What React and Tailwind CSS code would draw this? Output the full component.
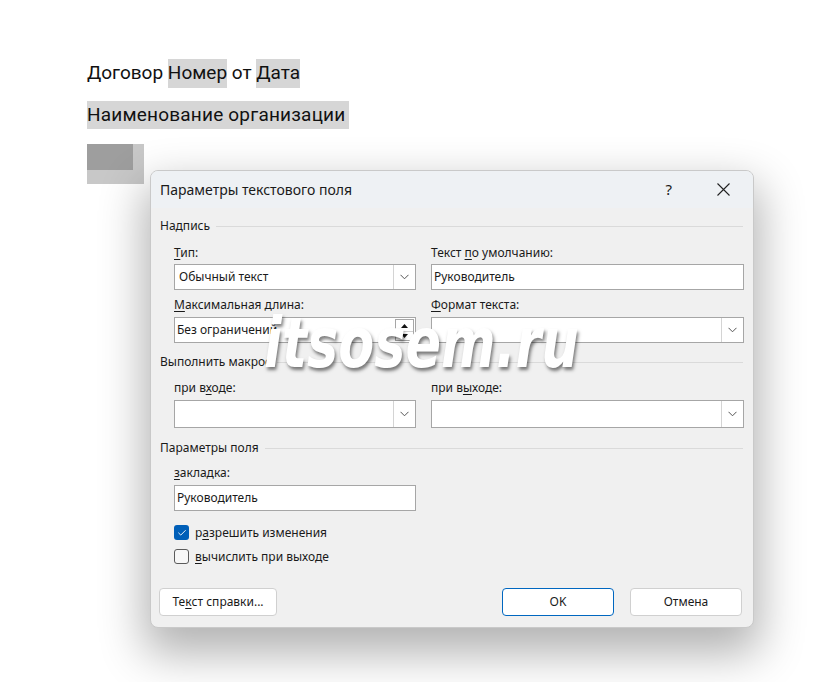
import { Check } from "lucide-react";

const ui = { fontFamily: '"Noto Sans", "Open Sans", sans-serif' };

function U({ children }) {
  return <span className="underline underline-offset-2">{children}</span>;
}

function Chevron() {
  return (
    <div className="flex w-[22px] shrink-0 items-center justify-center border-l border-[#d4d4d4]">
      <svg width="9" height="6" viewBox="0 0 9 6" fill="none">
        <path d="M0.5 0.8 L4.5 4.8 L8.5 0.8" stroke="#555" strokeWidth="1" />
      </svg>
    </div>
  );
}

function Select({ value, h = "h-[26px]" }) {
  return (
    <div className={`flex ${h} border border-[#a6a6a6] bg-white`}>
      <div className="flex flex-1 items-center px-[4px] text-[12px] text-[#1a1a1a]">{value}</div>
      <Chevron />
    </div>
  );
}

function Input({ value }) {
  return (
    <div className="flex h-[26px] items-center border border-[#a6a6a6] bg-white px-[2px] text-[12px] text-[#1a1a1a]">
      {value}
    </div>
  );
}

function Section({ title }) {
  return (
    <div className="flex h-[16px] items-center gap-[6px] pl-[9px] pr-[10px] text-[12px] text-[#1a1a1a]">
      <span>{title}</span>
      <div className="h-px flex-1 bg-[#dadada]" />
    </div>
  );
}

function Label({ children }) {
  return <div className="h-[16px] text-[12px] leading-[16px] text-[#1a1a1a]">{children}</div>;
}

export default function App() {
  return (
    <div className="relative h-[682px] w-[833px] overflow-hidden bg-white">
      {/* document */}
      <div className="pl-[87px] pt-[61px]" style={{ fontFamily: 'Roboto, "Noto Sans", sans-serif' }}>
        <div className="flex h-[25px] items-center text-[19px] text-[#111]">
          <span>Договор&nbsp;</span>
          <span className="bg-[#d6d6d6]">Номер</span>
          <span>&nbsp;от&nbsp;</span>
          <span className="bg-[#d6d6d6]">Дата</span>
        </div>
        <div className="mt-[17px] flex h-[24px] items-center text-[19px] text-[#111]">
          <span className="bg-[#d6d6d6] pr-[4px] tracking-[0.2px]">Наименование организации</span>
        </div>
        <div className="mt-[17px] h-[40px] w-[57px] bg-[#c8c8c8]">
          <div className="h-[26px] w-[46px] bg-[#9e9e9e]" />
        </div>
      </div>

      {/* dialog */}
      <div
        className="absolute left-[150px] top-[170px] h-[458px] w-[604px] overflow-hidden rounded-[8px] border border-[#c9c9c9] bg-[#f0f0f0] shadow-[0_20px_45px_6px_rgba(0,0,0,0.3)]"
        style={ui}
      >
        <div className="flex h-[37px] items-center bg-[#eef1f4] pl-[9px] pr-[23px] text-[14px] text-[#1a1a1a]">
          <span className="flex-1">Параметры текстового поля</span>
          <span className="mr-[45px] text-[15px]">?</span>
          <svg width="13" height="13" viewBox="0 0 13 13" fill="none">
            <path d="M0.5 0.5 L12.5 12.5 M12.5 0.5 L0.5 12.5" stroke="#222" strokeWidth="1.1" />
          </svg>
        </div>

        <div className="pt-[10px]">
          <Section title="Надпись" />
          <div className="mt-[11px] grid grid-cols-[242px_313px] gap-x-[15px] pl-[23px]">
            <div>
              <Label><U>Т</U>ип:</Label>
              <div className="mt-[3px]"><Select value="Обычный текст" /></div>
            </div>
            <div>
              <Label>Текст <U>п</U>о умолчанию:</Label>
              <div className="mt-[3px]"><Input value="Руководитель" /></div>
            </div>
            <div className="mt-[7px]">
              <Label><U>М</U>аксимальная длина:</Label>
              <div className="mt-[4px] flex h-[26px] border border-[#a6a6a6] bg-white">
                <div className="flex min-w-0 flex-1 items-center px-[2px] text-[12px] text-[#1a1a1a]">Без ограничений</div>
                <div className="my-[1px] mr-[1px] flex w-[19px] shrink-0 flex-col border border-[#a6a6a6] bg-white">
                  <div className="flex h-[11px] items-center justify-center">
                    <svg width="7" height="4" viewBox="0 0 7 4"><path d="M0 4 L3.5 0 L7 4 Z" fill="#111" /></svg>
                  </div>
                  <div className="flex flex-1 items-center justify-center border-t border-[#d0d0d0]">
                    <svg width="7" height="4" viewBox="0 0 7 4"><path d="M0 0 L3.5 4 L7 0 Z" fill="#111" /></svg>
                  </div>
                </div>
              </div>
            </div>
            <div className="mt-[7px]">
              <Label><U>Ф</U>ормат текста:</Label>
              <div className="mt-[4px]"><Select value="" /></div>
            </div>
          </div>

          <div className="mt-[11px]"><Section title="Выполнить макрос" /></div>
          <div className="mt-[10px] grid grid-cols-[242px_313px] gap-x-[15px] pl-[23px]">
            <div>
              <Label>при в<U>х</U>оде:</Label>
              <div className="mt-[4px]"><Select value="" h="h-[28px]" /></div>
            </div>
            <div>
              <Label>при в<U>ы</U>ходе:</Label>
              <div className="mt-[4px]"><Select value="" h="h-[28px]" /></div>
            </div>
          </div>

          <div className="mt-[12px]"><Section title="Параметры поля" /></div>
          <div className="mt-[9px] w-[265px] pl-[23px]">
            <Label><U>з</U>акладка:</Label>
            <div className="mt-[4px]"><Input value="Руководитель" /></div>
          </div>

          <div className="mt-[14px] flex flex-col gap-[9px] pl-[23px] text-[12px] text-[#1a1a1a]">
            <div className="flex h-[15px] items-center gap-[6px]">
              <div className="flex h-[15px] w-[15px] items-center justify-center rounded-[3px] bg-[#005fb8]">
                <Check size={10} strokeWidth={2.2} color="white" />
              </div>
              <span>р<U>а</U>зрешить изменения</span>
            </div>
            <div className="flex h-[15px] items-center gap-[6px]">
              <div className="h-[15px] w-[15px] rounded-[3px] border border-[#5a5a5a] bg-[#f7f7f7]" />
              <span><U>в</U>ычислить при выходе</span>
            </div>
          </div>

          <div className="mt-[24px] flex items-center pl-[8px] pr-[11px] text-[12px] text-[#1a1a1a]">
            <button className="flex h-[28px] w-[118px] items-center justify-center rounded-[4px] border border-[#d0d0d0] bg-white">
              Те<U>к</U>ст справки...
            </button>
            <div className="flex-1" />
            <button className="flex h-[28px] w-[112px] items-center justify-center rounded-[4px] border border-[#0067c0] bg-white">
              OK
            </button>
            <button className="ml-[16px] flex h-[28px] w-[112px] items-center justify-center rounded-[4px] border border-[#d0d0d0] bg-white">
              Отмена
            </button>
          </div>
        </div>
      </div>

      {/* watermark */}
      <div
        className="absolute left-[264px] top-[309px] origin-left scale-x-[0.76] text-[69px] font-bold italic leading-none text-white [text-shadow:2px_3px_4px_rgba(0,0,0,0.5)]"
        style={{ fontFamily: '"DejaVu Sans", sans-serif' }}
      >
        itsosem.ru
      </div>
    </div>
  );
}
